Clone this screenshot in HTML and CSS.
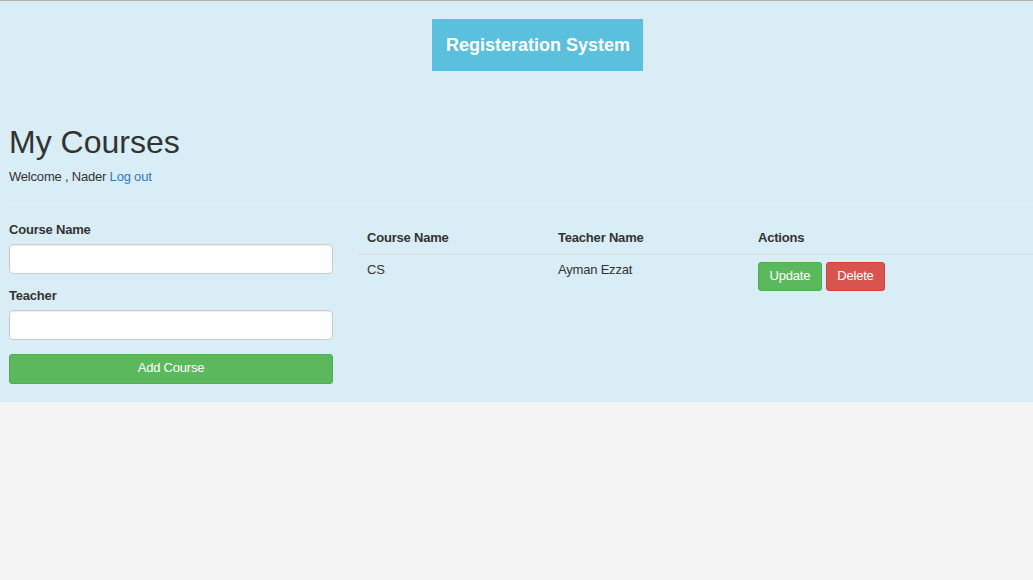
FILE: index.html
```html
<!DOCTYPE html>
<html>
<head>
<meta charset="utf-8">
<title>My Courses</title>
<link rel="stylesheet" href="styles.css">
</head>
<body>
<div class="page">
  <header class="brand-bar">
    <div class="brand">Registeration System</div>
  </header>
  <h1 class="title">My Courses</h1>
  <p class="welcome">Welcome , Nader <a href="#" class="logout">Log out</a></p>
  <hr class="divider">
  <div class="content">
    <form class="course-form">
      <div class="form-group">
        <label class="label">Course Name</label>
        <input class="input" type="text">
      </div>
      <div class="form-group">
        <label class="label">Teacher</label>
        <input class="input" type="text">
      </div>
      <button type="button" class="btn btn-success btn-block">Add Course</button>
    </form>
    <table class="courses">
      <thead>
        <tr>
          <th class="col-course">Course Name</th>
          <th class="col-teacher">Teacher Name</th>
          <th>Actions</th>
        </tr>
      </thead>
      <tbody>
        <tr>
          <td>CS</td>
          <td>Ayman Ezzat</td>
          <td>
            <div class="actions">
              <button type="button" class="btn btn-success btn-sm">Update</button>
              <button type="button" class="btn btn-danger btn-sm">Delete</button>
            </div>
          </td>
        </tr>
      </tbody>
    </table>
  </div>
</div>
</body>
</html>
```
FILE: styles.css
```css
html, body {
  margin: 0;
  padding: 0;
}
body {
  background: #f4f4f4;
  border-top: 1px solid #b1b1b1;
  font-family: "Liberation Sans", Arial, sans-serif;
  font-size: 13px;
  letter-spacing: -0.2px;
  line-height: 20px;
  color: #333;
  overflow-x: hidden;
}
.page {
  width: 1075px;
  box-sizing: border-box;
  background: #d9edf7;
  padding: 18px 0 18px 9px;
}
.brand-bar {
  display: flex;
  justify-content: center;
  padding-right: 9px;
}
.brand {
  background: #5bc0de;
  color: #fff;
  font-weight: bold;
  font-size: 18px;
  letter-spacing: 0;
  line-height: 20px;
  padding: 16px 13px 16px 14px;
}
.title {
  margin: 54px 0 7px;
  font-size: 32px;
  letter-spacing: 0;
  line-height: 1.1;
  font-weight: 500;
  color: #333;
}
.welcome {
  margin: 0;
}
.logout {
  color: #337ab7;
  text-decoration: none;
}
.divider {
  margin: 17px 0 15px;
  border: 0;
  border-top: 1px solid #eaf1f4;
  height: 0;
}
.content {
  display: flex;
  align-items: flex-start;
  gap: 26px;
}
.course-form {
  width: 324px;
  flex: none;
}
.form-group {
  margin-bottom: 12px;
}
.label {
  display: block;
  font-weight: bold;
  margin-bottom: 4px;
}
.input {
  display: block;
  box-sizing: border-box;
  width: 100%;
  height: 30px;
  margin: 0;
  padding: 4px 10px;
  background: #fff;
  border: 1px solid #ccc;
  border-radius: 4px;
  box-shadow: inset 0 1px 1px rgba(0, 0, 0, 0.075);
  font: inherit;
}
.form-group + .btn-block {
  margin-top: 14px;
}
.form-group:nth-of-type(2) {
  margin-bottom: 0;
}
.btn {
  box-sizing: border-box;
  font-family: inherit;
  font-size: 13px;
  letter-spacing: -0.2px;
  color: #fff;
  border: 1px solid transparent;
  border-radius: 3px;
  cursor: pointer;
  margin: 0;
}
.btn-success {
  background: #5cb85c;
  border-color: #4cae4c;
}
.btn-danger {
  background: #d9534f;
  border-color: #d43f3a;
}
.btn-block {
  display: block;
  width: 100%;
  height: 30px;
  line-height: 26px;
  padding: 0 0 2px;
}
.btn-sm {
  height: 29px;
  line-height: 25px;
  padding: 0 10.5px 2px;
}
.courses {
  flex: 1;
  border-collapse: collapse;
}
.courses th,
.courses td {
  text-align: left;
  vertical-align: top;
  padding: 8px;
}
.courses th {
  font-weight: bold;
  padding-top: 8px;
  padding-bottom: 6px;
  border-bottom: 1px solid #dddddd;
}
.courses td {
  padding-top: 5px;
}
.col-course {
  width: 175px;
}
.col-teacher {
  width: 184px;
}
.actions {
  display: flex;
  gap: 4px;
  margin-top: 2px;
}
```
